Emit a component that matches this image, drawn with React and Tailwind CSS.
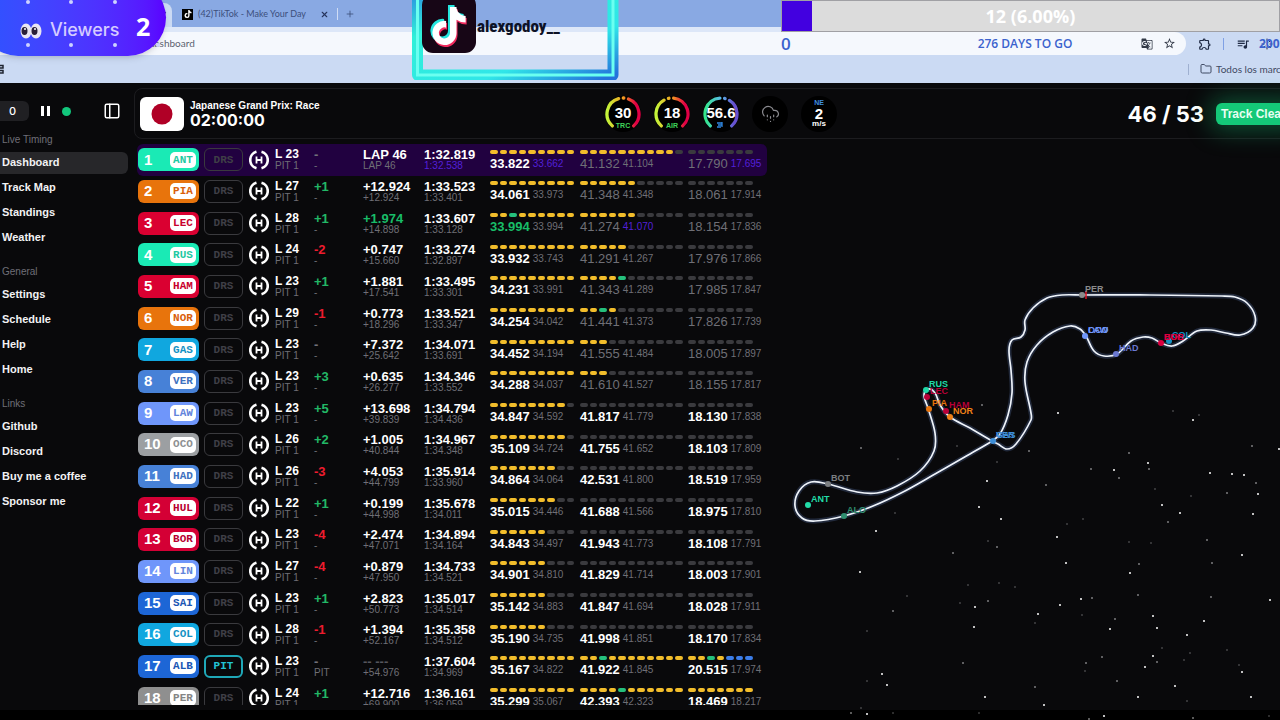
import { Fragment } from 'react';
import { PanelLeft, CloudHail, Folder, Loader, Plus, X } from 'lucide-react';
import { FaTiktok } from 'react-icons/fa';
import { MdGTranslate, MdOutlineExtension, MdQueueMusic, MdStarBorder } from 'react-icons/md';

const NAV = [
  { title: 'Live Timing', items: ['Dashboard', 'Track Map', 'Standings', 'Weather'] },
  { title: 'General', items: ['Settings', 'Schedule', 'Help', 'Home'] },
  { title: 'Links', items: ['Github', 'Discord', 'Buy me a coffee', 'Sponsor me'] },
];

const TEAMS = {
  mercedes: { bg: 'bg-[#1aeab5]', text: 'text-[#1fc9a2]' },
  mclaren: { bg: 'bg-[#e8740c]', text: 'text-[#d9600a]' },
  ferrari: { bg: 'bg-[#da0031]', text: 'text-[#c8002c]' },
  alpine: { bg: 'bg-[#10a7df]', text: 'text-[#1592c4]' },
  redbull: { bg: 'bg-[#4781d7]', text: 'text-[#3f72c0]' },
  rb: { bg: 'bg-[#6f96fa]', text: 'text-[#6384dc]' },
  haas: { bg: 'bg-[#9c9fa2]', text: 'text-[#8d8f92]' },
  audi: { bg: 'bg-[#d40035]', text: 'text-[#b80030]' },
  williams: { bg: 'bg-[#1d66d6]', text: 'text-[#1b56b4]' },
  cadillac: { bg: 'bg-[#8f8f8f]', text: 'text-[#858585]' },
};

// segments: y = yellow, g = green, b = blue, - = not set
const DRIVERS = [
  { code: 'ANT', team: 'mercedes', laps: 23, delta: '-', gap: 'LAP 46', leader: 'LAP 46', last: '1:32.819', best: '1:32.538', sectors: [['33.822', '33.662', 'yyyyyyyyy'], ['41.132', '41.104', 'yyyyyyyyyy-'], ['17.790', '17.695', '-------']], live: true, purple: ['lap', 0, 2] },
  { code: 'PIA', team: 'mclaren', laps: 27, delta: '+1', gap: '+12.924', leader: '+12.924', last: '1:33.523', best: '1:33.401', sectors: [['34.061', '33.973', 'yyyyyyyyy'], ['41.348', '41.348', 'yyyyyy-----'], ['18.061', '17.914', '-------']], live: true },
  { code: 'LEC', team: 'ferrari', laps: 28, delta: '+1', gap: '+1.974', leader: '+14.898', last: '1:33.607', best: '1:33.128', sectors: [['33.994', '33.994', 'yygyyyyyy'], ['41.274', '41.070', 'yyyyyy-----'], ['18.154', '17.836', '-------']], live: true, close: true, purple: [1], green: [0] },
  { code: 'RUS', team: 'mercedes', laps: 24, delta: '-2', gap: '+0.747', leader: '+15.660', last: '1:33.274', best: '1:32.897', sectors: [['33.932', '33.743', 'yyyyyyyyy'], ['41.291', '41.267', 'yyyyy------'], ['17.976', '17.866', '-------']], live: true },
  { code: 'HAM', team: 'ferrari', laps: 23, delta: '+1', gap: '+1.881', leader: '+17.541', last: '1:33.495', best: '1:33.301', sectors: [['34.231', '33.991', 'yyyyyyyyy'], ['41.343', '41.289', 'yyyyg------'], ['17.985', '17.847', '-------']], live: true },
  { code: 'NOR', team: 'mclaren', laps: 29, delta: '-1', gap: '+0.773', leader: '+18.296', last: '1:33.521', best: '1:33.347', sectors: [['34.254', '34.042', 'yyyyyyyyy'], ['41.441', '41.373', 'yygy-------'], ['17.826', '17.739', '-------']], live: true },
  { code: 'GAS', team: 'alpine', laps: 23, delta: '-', gap: '+7.372', leader: '+25.642', last: '1:34.071', best: '1:33.691', sectors: [['34.452', '34.194', 'yyyyyyyyy'], ['41.555', '41.484', 'yyy--------'], ['18.005', '17.897', '-------']], live: true },
  { code: 'VER', team: 'redbull', laps: 23, delta: '+3', gap: '+0.635', leader: '+26.277', last: '1:34.346', best: '1:33.552', sectors: [['34.288', '34.037', 'yyyyyyyyy'], ['41.610', '41.527', 'yyy--------'], ['18.155', '17.817', '-------']], live: true },
  { code: 'LAW', team: 'rb', laps: 23, delta: '+5', gap: '+13.698', leader: '+39.839', last: '1:34.794', best: '1:34.436', sectors: [['34.847', '34.592', 'yyyyyyyy-'], ['41.817', '41.779', '-----------'], ['18.130', '17.838', '-------']] },
  { code: 'OCO', team: 'haas', laps: 26, delta: '+2', gap: '+1.005', leader: '+40.844', last: '1:34.967', best: '1:34.348', sectors: [['35.109', '34.724', 'yyyyyyyy-'], ['41.755', '41.652', '-----------'], ['18.103', '17.809', '-------']] },
  { code: 'HAD', team: 'redbull', laps: 26, delta: '-3', gap: '+4.053', leader: '+44.799', last: '1:35.914', best: '1:33.960', sectors: [['34.864', '34.064', 'yyyyyyy--'], ['42.531', '41.800', '-----------'], ['18.519', '17.959', '-------']] },
  { code: 'HUL', team: 'audi', laps: 22, delta: '+1', gap: '+0.199', leader: '+44.998', last: '1:35.678', best: '1:34.011', sectors: [['35.015', '34.446', 'yyyyyyy--'], ['41.688', '41.566', '-----------'], ['18.975', '17.810', '-------']] },
  { code: 'BOR', team: 'audi', laps: 23, delta: '-4', gap: '+2.474', leader: '+47.071', last: '1:34.894', best: '1:34.164', sectors: [['34.843', '34.497', 'yyyyyy---'], ['41.943', '41.773', '-----------'], ['18.108', '17.791', '-------']] },
  { code: 'LIN', team: 'rb', laps: 27, delta: '-4', gap: '+0.879', leader: '+47.950', last: '1:34.733', best: '1:34.521', sectors: [['34.901', '34.810', 'yyyyyy---'], ['41.829', '41.714', '-----------'], ['18.003', '17.901', '-------']] },
  { code: 'SAI', team: 'williams', laps: 23, delta: '+1', gap: '+2.823', leader: '+50.773', last: '1:35.017', best: '1:34.514', sectors: [['35.142', '34.883', 'yyyyyy---'], ['41.847', '41.694', '-----------'], ['18.028', '17.911', '-------']] },
  { code: 'COL', team: 'alpine', laps: 28, delta: '-1', gap: '+1.394', leader: '+52.167', last: '1:35.358', best: '1:34.512', sectors: [['35.190', '34.735', 'yyyyyy---'], ['41.998', '41.851', '-----------'], ['18.170', '17.834', '-------']] },
  { code: 'ALB', team: 'williams', laps: 23, delta: '-', gap: '-- ---', leader: '+54.976', last: '1:37.604', best: '1:34.969', pit: true, sectors: [['35.167', '34.822', 'yyyyyyyyy'], ['41.922', '41.845', 'yygyyyyyyyy'], ['20.515', '17.974', 'yygybbb']] },
  { code: 'PER', team: 'cadillac', laps: 24, delta: '+1', gap: '+12.716', leader: '+69.900', last: '1:36.161', best: '1:36.059', sectors: [['35.299', '35.067', 'yyyyyyyyy'], ['42.393', '42.323', 'yyyygyyyyyy'], ['18.469', '18.217', 'yyyyyyy']] },
];

const SEGMENT_COLORS = {
  y: 'bg-[#f2bd2b]',
  g: 'bg-[#25c07c]',
  b: 'bg-[#3b7de8]',
  '-': 'bg-[#3a3a3e]',
};

const SECTOR_WIDTHS = ['w-[84px]', 'w-[103px]', 'w-[65px]'];

const TRACK = [
  [1082, 295], [1150, 295], [1222, 296], [1235, 297], [1247, 303], [1255, 316], [1253, 328], [1240, 335], [1226, 333],
  [1211, 330], [1197, 331], [1183, 341], [1172, 346], [1161, 343], [1152, 338], [1143, 337], [1131, 341], [1117, 354],
  [1104, 356], [1094, 351], [1086, 336], [1080, 329], [1070, 326], [1053, 332], [1037, 345], [1027, 362], [1025, 382],
  [1031, 413], [1031, 420], [1016, 444], [1007, 449], [998, 444], [992, 441], [970, 428], [950, 417], [940, 405],
  [935, 393], [928, 389], [924, 395], [928, 408], [935, 433], [934, 451], [920, 471], [897, 486], [877, 493],
  [857, 492], [828, 484], [811, 482], [799, 491], [795, 506], [802, 518], [815, 521], [844, 516], [873, 506],
  [903, 492], [935, 474], [970, 454], [992, 441], [1000, 434], [1008, 415], [1012, 393], [1011, 370], [1009, 350],
  [1012, 340], [1021, 337], [1025, 330], [1025, 320], [1033, 308], [1047, 298], [1062, 295],
];

const MARKERS = [
  { x: 1082, y: 295, color: '#8c8c8c', labels: ['PER'] },
  { x: 1085, y: 336, color: '#6f96fa', labels: ['OCO', 'LAW'] },
  { x: 1116, y: 354, color: '#6a78d0', labels: ['HAD'] },
  { x: 1169, y: 341, color: '#1592c4', labels: ['COL'] },
  { x: 1161, y: 343, color: '#da0040', labels: ['BOR', 'HUL'] },
  { x: 927, y: 397, color: '#b80038', labels: ['LEC'] },
  { x: 926, y: 390, color: '#1fd9a8', labels: ['RUS'] },
  { x: 946, y: 411, color: '#b80038', labels: ['HAM'] },
  { x: 929, y: 409, color: '#e8740c', labels: ['PIA'] },
  { x: 950, y: 417, color: '#f08018', labels: ['NOR'] },
  { x: 993, y: 441, color: '#3f8fd8', labels: ['GAS', 'VER'] },
  { x: 828, y: 484, color: '#7c7f82', labels: ['BOT'] },
  { x: 844, y: 516, color: '#2f8f70', labels: ['ALO'] },
  { x: 808, y: 505, color: '#22dca8', labels: ['ANT'] },
];

// x, y, brightness
const STARS = [
  [1058, 413, 3], [982, 405, 2], [1193, 420, 3], [1173, 411, 1], [1199, 415, 1], [861, 448, 2], [898, 459, 1], [957, 446, 1],
  [997, 462, 1], [1029, 451, 2], [1129, 453, 2], [1148, 463, 3], [1149, 469, 2], [1114, 470, 3], [1119, 478, 2], [1091, 469, 2],
  [1210, 473, 3], [1232, 474, 3], [1244, 475, 3], [1256, 483, 2], [1252, 446, 2], [1279, 449, 3], [987, 481, 3], [1046, 485, 2],
  [1155, 489, 1], [1227, 493, 2], [1191, 496, 1], [1258, 494, 3], [1162, 505, 3], [979, 507, 3], [1180, 513, 3], [1253, 514, 3],
  [1168, 522, 2], [1001, 519, 3], [1083, 519, 1], [1067, 524, 1], [895, 513, 1], [876, 531, 3], [1057, 537, 3], [988, 541, 1],
  [997, 547, 2], [1207, 540, 2], [1151, 543, 1], [1129, 542, 1], [953, 553, 2], [1066, 563, 3], [1139, 564, 2], [1242, 555, 3],
  [1212, 563, 2], [1130, 573, 3], [860, 572, 3], [999, 583, 1], [1015, 587, 1], [968, 585, 1], [907, 596, 1], [960, 603, 1],
  [988, 601, 2], [975, 607, 3], [893, 611, 2], [1081, 599, 3], [1092, 598, 2], [1060, 605, 3], [1138, 595, 2], [1211, 597, 2],
  [1270, 600, 3], [1038, 614, 3], [1035, 623, 1], [1082, 615, 1], [1115, 619, 2], [1153, 616, 3], [1110, 629, 3], [1157, 628, 3],
  [1204, 621, 3], [974, 627, 3], [867, 631, 1], [1187, 635, 3], [1162, 648, 1], [1227, 650, 1], [1153, 656, 3], [1102, 657, 2],
  [1190, 653, 1], [1184, 660, 1], [1086, 663, 2], [1145, 667, 3], [1157, 662, 2], [1242, 672, 3], [1239, 665, 1], [963, 663, 2],
  [1085, 671, 1], [882, 674, 3], [887, 685, 3], [867, 681, 1], [1035, 687, 2], [1117, 681, 2], [1175, 686, 3], [985, 697, 3],
  [1044, 705, 3], [1138, 697, 3], [1251, 697, 3], [1187, 701, 1], [851, 713, 2], [867, 714, 3], [893, 713, 1], [861, 708, 1],
  [979, 713, 1], [1104, 716, 3], [1193, 718, 2], [1089, 719, 2], [1269, 716, 1],
];

// Closed smooth curve through the points
function smoothPath(points) {
  const n = points.length;
  const at = (i) => points[(i + n) % n];
  const dir = (i) => {
    const [ax, ay] = at(i - 1);
    const [bx, by] = at(i + 1);
    const len = Math.hypot(bx - ax, by - ay);
    return [(bx - ax) / len, (by - ay) / len];
  };
  let d = `M${points[0][0]} ${points[0][1]}`;
  for (let i = 0; i < n; i++) {
    const [x1, y1] = at(i);
    const [x2, y2] = at(i + 1);
    const h = Math.hypot(x2 - x1, y2 - y1) / 3;
    const [ux, uy] = dir(i);
    const [vx, vy] = dir(i + 1);
    d += `C${x1 + ux * h} ${y1 + uy * h} ${x2 - vx * h} ${y2 - vy * h} ${x2} ${y2}`;
  }
  return d + 'Z';
}

function BrowserChrome() {
  return (
    <header className="shrink-0 bg-[#cbdaf3] font-[Lato,sans-serif] text-[10px] text-[#3c4f7c]">
      {/* Tab strip */}
      <div className="flex h-[27px] items-end bg-[#89a9e3]">
        <div className="flex h-6 w-[172px] items-center justify-end rounded-tr-lg bg-[#cbdaf3] pr-1">
          <X size={10} strokeWidth={3} />
        </div>
        <div className="flex h-[26px] items-center">
          <span className="ml-[10px] flex size-[11px] items-center justify-center bg-black">
            <FaTiktok size={8} className="text-white" />
          </span>
          <span className="ml-[5px] w-[122px] whitespace-nowrap text-[9px]">(42)TikTok - Make Your Day</span>
          <button aria-label="Close tab" className="text-[#26355c]"><X size={9} strokeWidth={3} /></button>
          <span className="ml-2 h-3 w-px bg-[#cfdcf5]" />
          <button aria-label="New tab" className="ml-[7px]"><Plus size={10} strokeWidth={2} /></button>
        </div>
      </div>

      {/* Address bar */}
      <div className="flex h-7 items-center border-t-[5px] border-[#dde7f8]">
        <div className="flex h-full flex-1 items-center justify-between rounded-r-full bg-[#f5f8fd] pl-[149px] pr-[10px] text-[#5c6370]">
          <span>dashboard</span>
          <span className="flex items-center gap-[10px] text-[#333a48]">
            <MdGTranslate size={12} />
            <MdStarBorder size={13} />
          </span>
        </div>
        <div className="flex w-[94px] items-center text-[#1f2a44]">
          <MdOutlineExtension size={14} className="ml-3" />
          <span className="ml-[11px] h-3 w-px bg-[#7fa0e4]" />
          <MdQueueMusic size={14} className="ml-3" />
          <Loader size={12} className="ml-[11px]" />
        </div>
      </div>

      {/* Bookmarks */}
      <div className="flex h-7 items-center">
        <svg width="4" height="10" viewBox="0 0 4 10" className="text-[#1f2430]">
          <path d="M0 1.5h3v2.5H0M0 6.5h3V9H0" fill="none" stroke="currentColor" strokeWidth="1.5" />
        </svg>
        <span className="ml-auto h-[11px] w-px bg-[#9fb0d0]" />
        <div className="flex w-[91px] items-center gap-1 overflow-hidden whitespace-nowrap pl-[11px] text-[#3f4a63]">
          <Folder size={12} className="shrink-0" />
          <span>Todos los marcadores</span>
        </div>
      </div>
    </header>
  );
}

function ViewersBadge() {
  return (
    <div className="absolute -left-5 -top-5 h-[76px] w-[186px] rounded-[38px] bg-linear-to-r from-[#2b55ff] to-[#5a00ff] shadow-md">
      <svg viewBox="0 0 186 76" className="absolute inset-0 h-full w-full">
        {[[48, 22], [91, 22], [135, 22], [48, 65], [91, 65], [135, 65], [178, 65]].map(([x, y]) => (
          <circle key={`${x}-${y}`} cx={x} cy={y} r="2" fill="#cdd3ff" />
        ))}
        <ellipse cx="46" cy="51" rx="5.5" ry="7.5" fill="#e9e6f2" />
        <ellipse cx="56" cy="51" rx="5.5" ry="7.5" fill="#e9e6f2" />
        <ellipse cx="44.5" cy="51" rx="3" ry="4" fill="#2b2038" />
        <ellipse cx="54.5" cy="51" rx="3" ry="4" fill="#2b2038" />
        <circle cx="45" cy="49" r="1" fill="#fff" />
        <circle cx="55" cy="49" r="1" fill="#fff" />
      </svg>
      <div className="relative flex items-center pl-[70px] pt-7">
        <span className="w-[86px] pt-2 font-[Inter,sans-serif] text-[18px] leading-7 font-medium text-[#d5cbff]">Viewers</span>
        <span className="font-['Open_Sans',sans-serif] text-[25px] leading-8 font-bold text-white">2</span>
      </div>
    </div>
  );
}

function TikTokFrame() {
  return (
    <div className="absolute left-[412px] top-0 h-20 w-[207px]">
      <svg viewBox="0 0 207 80" className="absolute inset-0 h-full w-full">
        <defs>
          <linearGradient id="neon" x1="0" y1="0" x2="1" y2="1">
            <stop offset="0" stopColor="#2a9be0" />
            <stop offset="0.25" stopColor="#2ff0d8" />
            <stop offset="0.7" stopColor="#30e6e8" />
            <stop offset="1" stopColor="#2472dc" />
          </linearGradient>
        </defs>
        <path d="M5.500 -4V75H201V-4" fill="none" stroke="url(#neon)" strokeWidth="11" strokeLinejoin="round" />
        <path d="M5.500 -4V75H201V-4" fill="none" stroke="#6bfff0" strokeWidth="3" />
        <rect x="10" y="-6" width="54" height="59" rx="11" fill="#170616" />
        <FaTiktok x="16" y="5" size={38} color="#25e6df" />
        <FaTiktok x="19" y="9" size={38} color="#f02a5e" />
        <FaTiktok x="18" y="7" size={38} color="#ffffff" />
      </svg>
      <span className="relative block pl-[65px] pt-[14px] font-['Roboto_Condensed',Roboto,sans-serif] text-[17px] leading-6 font-extrabold text-[#0d1226]">
        alexgodoy__
      </span>
    </div>
  );
}

function GoalBar() {
  return (
    <div className="absolute right-0 top-0 w-[499px] font-['Open_Sans',sans-serif]">
      <div className="flex h-8 border border-[#a0a0a4] bg-[#dcdcdc]">
        <div className="w-[6%] bg-[#4200e0]" />
        <div className="flex flex-1 items-center justify-center pr-[30px] pt-px text-[18px] font-bold text-white">
          12 (6.00%)
        </div>
      </div>
      <div className="flex h-[23px] items-center justify-between text-[#3b62cd]">
        <span className="w-8 text-[17px] font-semibold">0</span>
        <span className="pr-[22px] text-[12px] font-semibold">276 DAYS TO GO</span>
        <span className="-mr-[3px] w-6 text-[12px] font-bold">200</span>
      </div>
    </div>
  );
}

function Sidebar() {
  return (
    <aside className="flex w-[134px] shrink-0 flex-col">
      <div className="mt-[18px] flex h-5 items-center">
        <button className="h-5 w-[29px] rounded-r-md bg-[#202023] pr-1 text-[11px] leading-5 font-medium text-white">0</button>
        <button aria-label="Pause" className="ml-3 flex gap-[3px]">
          <span className="h-[10px] w-[3px] bg-white" />
          <span className="h-[10px] w-[3px] bg-white" />
        </button>
        <span className="ml-3 size-[9px] rounded-full bg-[#12c77c]" />
        <button aria-label="Toggle sidebar" className="ml-8 text-white"><PanelLeft size={18} /></button>
      </div>
      <nav className="mt-[11px] flex flex-col gap-[15px] font-['Liberation_Sans',sans-serif]">
        {NAV.map((group) => (
          <div key={group.title}>
            <h2 className="mb-1 pl-[2px] text-[10px] leading-4 text-[#6f6f78]">{group.title}</h2>
            <div className="flex flex-col gap-[3px]">
              {group.items.map((item) => (
                <a
                  key={item}
                  href="#"
                  className={`mr-[6px] h-[22px] rounded-r-md pl-[2px] text-[11px] leading-[21px] font-bold text-[#f2f2f4] ${item === 'Dashboard' ? 'bg-[#27272a]' : ''}`}
                >
                  {item}
                </a>
              ))}
            </div>
          </div>
        ))}
      </nav>
    </aside>
  );
}

function Gauge({ id, value, label, colors, angle }) {
  const point = (deg) => {
    const a = ((deg - 90) * Math.PI) / 180;
    return `${18 + 16 * Math.cos(a)} ${18 + 16 * Math.sin(a)}`;
  };
  return (
    <svg width="36" height="36" viewBox="0 0 36 36" className="font-['Liberation_Sans',sans-serif]">
      <defs>
        <linearGradient id={id} gradientUnits="userSpaceOnUse" x1="2" y1="0" x2="34" y2="0">
          <stop offset="0" stopColor={colors[0]} />
          <stop offset="0.5" stopColor={colors[1]} />
          <stop offset="0.9" stopColor={colors[2]} />
        </linearGradient>
      </defs>
      <circle cx="18" cy="18" r="18" fill="#000" />
      <g fill="none" stroke={`url(#${id})`} strokeWidth="3.300" strokeLinecap="round">
        <path d={`M${point(-138)}A16 16 0 0 1 ${point(angle - 18)}`} />
        <path d={`M${point(angle + 18)}A16 16 0 0 1 ${point(138)}`} />
        <path d={`M${point(angle - 1)}A16 16 0 0 1 ${point(angle + 1)}`} />
      </g>
      <text x="18" y="22" textAnchor="middle" fontSize="15" fontWeight="700" fill="#fff">{value}</text>
      {label ? (
        <text x="18" y="32" textAnchor="middle" fontSize="7" fontWeight="700" fill="#3fd35a">{label}</text>
      ) : (
        <path d="M14 27h5M15 29h4M14 31h4M19 26v5" stroke="#2f86e0" strokeWidth="1.300" />
      )}
    </svg>
  );
}

function SessionHeader() {
  return (
    <div className="-mr-6 mt-[5px] grid h-[51px] shrink-0 grid-cols-[465px_1fr_auto] items-center rounded-lg border border-[#1c1c1f] pl-[5px] pr-[3px]">
      <div className="flex items-center gap-[6px]">
        <svg width="44" height="34" viewBox="0 0 44 34">
          <rect width="44" height="34" rx="6" fill="#fff" />
          <circle cx="22" cy="17" r="10.500" fill="#b00026" />
        </svg>
        <div>
          <h1 className="font-['Liberation_Sans',sans-serif] text-[10px] leading-3 font-bold text-white">Japanese Grand Prix: Race</h1>
          <p className="text-[16px] leading-4 font-bold text-white">02:00:00</p>
        </div>
      </div>

      <div className="flex items-center gap-[13px]">
        <Gauge id="trc" value="30" label="TRC" angle={2} colors={['#c3f53a', '#f5a020', '#e00045']} />
        <Gauge id="air" value="18" label="AIR" angle={-12} colors={['#c3f53a', '#f5a020', '#e00045']} />
        <Gauge id="hum" value="56.6" angle={14} colors={['#34e88a', '#5ab9ea', '#6650d0']} />
        <div className="flex size-9 items-center justify-center rounded-full bg-black text-[#8b8b90]">
          <CloudHail size={19} strokeWidth={1.5} />
        </div>
        <div className="flex size-9 flex-col items-center justify-center rounded-full bg-black font-['Liberation_Sans',sans-serif] font-bold text-white">
          <span className="text-[7px] leading-[8px] text-[#3f8fe0]">NE</span>
          <span className="text-[15px] leading-[13px]">2</span>
          <span className="text-[8px] leading-[8px]">m/s</span>
        </div>
      </div>

      <div className="flex items-center gap-3">
        <p className="text-[22px] leading-6 font-bold text-white">46 / 53</p>
        <div className="w-[84px] rounded-md bg-[#14c878] pl-[5px] font-['Liberation_Sans',sans-serif] text-[12px] leading-[22px] font-bold whitespace-nowrap text-[#e8fff2] shadow-[0_0_24px_6px_rgba(20,200,120,0.35)]">
          Track Clear
        </div>
      </div>
    </div>
  );
}

function Tyre() {
  return (
    <svg width="20" height="22" viewBox="0 0 20 22" role="img" aria-label="Hard">
      <g fill="none" stroke="#fff">
        <path d="M7.500 2.800A8.500 8.500 0 0 0 7.500 19.200M12.500 2.800A8.500 8.500 0 0 1 12.500 19.200" strokeWidth="2.600" />
        <path d="M7.500 7.500v7M12.500 7.500v7M7.500 11h5" strokeWidth="1.800" />
      </g>
    </svg>
  );
}

function deltaColor(delta) {
  if (delta.startsWith('+')) return 'text-[#22b866]';
  if (delta.length > 1) return 'text-[#ee1c2e]';
  return 'text-[#71717a]';
}

function Sector({ sector, index, driver }) {
  const [time, best, segments] = sector;
  let timeColor = 'text-white font-bold';
  if (driver.green?.includes(index)) timeColor = 'text-[#18bd68] font-bold';
  else if (driver.live && index > 0) timeColor = 'text-[#6f6f76]';

  return (
    <div className="flex flex-col gap-[3px] pt-px">
      <div className={`flex gap-[2px] ${SECTOR_WIDTHS[index]}`}>
        {segments.split('').map((s, i) => (
          <span key={i} className={`h-1 flex-1 rounded-full ${SEGMENT_COLORS[s]}`} />
        ))}
      </div>
      <div className="flex items-center gap-[3px] leading-[14px]">
        <span className={`text-[13px] ${timeColor}`}>{time}</span>
        <span className={`text-[10px] ${driver.purple?.includes(index) ? 'text-[#5320d8]' : 'text-[#6f6f76]'}`}>{best}</span>
      </div>
    </div>
  );
}

function DriverRow({ driver, position }) {
  const team = TEAMS[driver.team];
  return (
    <tr className={position === 1 ? 'bg-[#210140]' : ''}>
      <td className="rounded-l-md pl-px">
        <div className={`flex h-[23px] w-[61px] items-center justify-between rounded-md pl-[6px] pr-[3px] ${team.bg}`}>
          <span className="text-[15px] font-bold text-white">{position}</span>
          <span className={`flex h-4 w-[26px] items-center justify-center rounded-[5px] bg-white font-['Liberation_Mono',monospace] text-[11px] font-bold ${team.text}`}>
            {driver.code}
          </span>
        </div>
      </td>
      <td>
        <div className={`flex h-[23px] w-[39px] items-center justify-center rounded-md border font-['Liberation_Mono',monospace] text-[11px] font-bold ${driver.pit ? 'border-2 border-[#1fa8b8] text-[#22c4d6]' : 'border-[#3a3a3e] text-[#3f3f46]'}`}>
          {driver.pit ? 'PIT' : 'DRS'}
        </div>
      </td>
      <td><Tyre /></td>
      <td className="pt-px">
        <div className="text-[12px] leading-[11px] font-bold text-white">L {driver.laps}</div>
        <div className="text-[10px] leading-[11px] text-[#6f6f76]">PIT 1</div>
      </td>
      <td className="pt-px">
        <div className={`text-[13px] leading-[11px] font-bold ${deltaColor(driver.delta)}`}>{driver.delta}</div>
        <div className="text-[10px] leading-[11px] text-[#6f6f76]">{driver.pit ? 'PIT' : '-'}</div>
      </td>
      <td className="pt-px">
        <div className={`text-[13px] leading-[11px] font-bold ${driver.close ? 'text-[#18bd68]' : driver.pit ? 'text-[#55555c]' : 'text-white'}`}>{driver.gap}</div>
        <div className="text-[10px] leading-[11px] text-[#6f6f76]">{driver.leader}</div>
      </td>
      <td className="pt-px">
        <div className="text-[13px] leading-[11px] font-bold text-white">{driver.last}</div>
        <div className={`text-[10px] leading-[11px] ${driver.purple?.includes('lap') ? 'text-[#5320d8]' : 'text-[#6f6f76]'}`}>{driver.best}</div>
      </td>
      {driver.sectors.map((sector, i) => (
        <td key={i} className={i === 2 ? 'rounded-r-md' : ''}>
          <Sector sector={sector} index={i} driver={driver} />
        </td>
      ))}
    </tr>
  );
}

function Leaderboard() {
  return (
    <div className="w-[630px] shrink-0 overflow-hidden">
      <table aria-label="Leaderboard" className="h-[570px] w-full table-fixed font-['Liberation_Sans',sans-serif] whitespace-nowrap">
        <colgroup>
          <col className="w-[67px]" />
          <col className="w-[45px]" />
          <col className="w-[26px]" />
          <col className="w-[39px]" />
          <col className="w-[49px]" />
          <col className="w-[61px]" />
          <col className="w-[66px]" />
          <col className="w-[90px]" />
          <col className="w-[108px]" />
          <col className="w-[79px]" />
        </colgroup>
        <tbody>
          {DRIVERS.map((driver, i) => (
            <DriverRow key={driver.code} driver={driver} position={i + 1} />
          ))}
        </tbody>
      </table>
    </div>
  );
}

function TrackMap() {
  const path = smoothPath(TRACK);
  return (
    <div className="min-w-0 flex-1">
      <svg viewBox="767 144 513 561" className="h-full w-full overflow-visible font-['Liberation_Sans',sans-serif]">
        {STARS.map(([x, y, b]) => (
          <circle key={`${x}-${y}`} cx={x} cy={y} r={b === 3 ? 1 : 0.8} fill="#fff" opacity={b === 3 ? 1 : b === 2 ? 0.8 : 0.4} />
        ))}
        <path d={path} fill="none" stroke="#2c3850" strokeWidth="5" opacity="0.7" />
        <path d={path} fill="none" stroke="#eef3fa" strokeWidth="1.700" />
        <path d="M1086 291v8" stroke="#e01020" strokeWidth="1.500" />
        {MARKERS.map((m) => (
          <Fragment key={m.labels[0]}>
            <circle cx={m.x} cy={m.y} r="3" fill={m.color} />
            {m.labels.map((label) => (
              <text key={label} x={m.x + 3} y={m.y - 3} fontSize="9" fontWeight="700" fill={m.color}>{label}</text>
            ))}
          </Fragment>
        ))}
      </svg>
    </div>
  );
}

export default function App() {
  return (
    <div className="relative flex h-screen w-full flex-col overflow-hidden bg-black font-[Inter,sans-serif]">
      <BrowserChrome />

      <div className="mb-[10px] flex min-h-0 flex-1 bg-[#09090b]">
        <Sidebar />
        <div className="flex min-w-0 flex-1 flex-col">
          <SessionHeader />
          <main className="mt-[5px] mb-[5px] flex min-h-0 flex-1 pl-[3px]">
            <Leaderboard />
            <TrackMap />
          </main>
        </div>
      </div>

      {/* Stream overlays */}
      <ViewersBadge />
      <TikTokFrame />
      <GoalBar />
    </div>
  );
}
